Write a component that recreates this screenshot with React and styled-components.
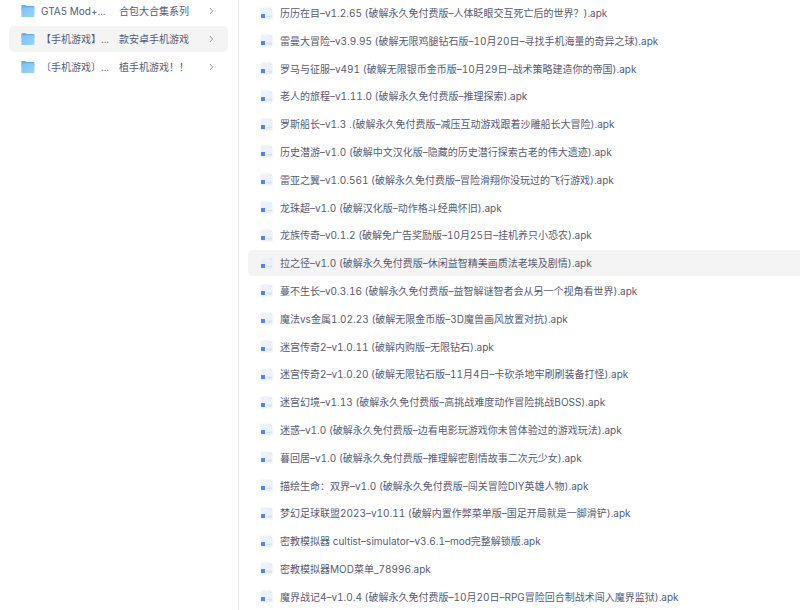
import React from "react";
import styled, { createGlobalStyle } from "styled-components";

const GlobalStyle = createGlobalStyle`
  * { box-sizing: border-box; }
  body {
    margin: 0;
    background: #ffffff;
    color: #585b75;
    font-family: Inter, "Noto Sans CJK SC", sans-serif;
    font-size: 10px;
    font-variant-numeric: tabular-nums;
    line-height: 16px;
    overflow: hidden;
  }
`;

const Page = styled.div`
  display: grid;
  grid-template-columns: 239px minmax(0, 1fr);
  height: 100vh;
`;

const Sidebar = styled.nav`
  border-right: 1px solid #e9e9ec;
  padding: 0 10px 0 9px;
  overflow: hidden;
`;

const FolderList = styled.ul`
  list-style: none;
  margin: -2px 0 0;
  padding: 0;
  display: grid;
  gap: 2px;
`;

const FolderButton = styled.button`
  display: flex;
  align-items: center;
  width: 100%;
  height: 26px;
  padding: 0 14px 0 12px;
  border: 0;
  border-radius: 5px;
  background: ${(p) => (p.$active ? "#f4f4f4" : "transparent")};
  color: inherit;
  font: inherit;
  text-align: left;
  cursor: pointer;
  &:hover { background: #f4f4f4; }
`;

const FolderName = styled.span`
  display: flex;
  justify-content: space-between;
  flex: 1;
  margin: 0 20px 0 6px;
  white-space: pre;
`;

const FileList = styled.ul`
  list-style: none;
  margin: 0;
  padding: 0 0 0 9px;
  min-height: 100vh;
  display: grid;
  align-content: space-between;
`;

const FileLink = styled.a`
  display: flex;
  align-items: center;
  gap: 7px;
  height: 26px;
  padding: 0 12px;
  border-radius: 5px 0 0 5px;
  background: ${(p) => (p.$active ? "#f4f4f4" : "transparent")};
  color: inherit;
  text-decoration: none;
  white-space: pre;
  &:hover { background: #f4f4f4; }
`;

const Icon = styled.svg`
  display: block;
  flex: none;
`;

function FolderIcon() {
  return (
    <Icon width="14" height="14" viewBox="0 0 14 14" aria-hidden="true">
      <defs>
        <linearGradient id="folder-front" x1="0" y1="0" x2="1" y2="1">
          <stop offset="0" stopColor="#7dc0f3" />
          <stop offset="1" stopColor="#9bd3fb" />
        </linearGradient>
      </defs>
      <path d="M0.4 2Q0.4 1 1.4 1H4.6L5.6 2H12.4Q13.4 2 13.4 3V6H0.4Z" fill="#62aeea" />
      <path d="M0.4 3.2H13.4V12.4Q13.4 13 12.8 13H1Q0.4 13 0.4 12.4Z" fill="url(#folder-front)" />
    </Icon>
  );
}

function ApkIcon() {
  return (
    <Icon width="13" height="13" viewBox="0 0 13 13" aria-hidden="true">
      <path d="M0.5 2Q0.5 0.5 2 0.5H10L12.7 3V12.5H2Q0.5 12.5 0.5 11Z" fill="#edf1fb" />
      <path d="M10 0.5L12.7 3H10Z" fill="#dce5fa" />
      <rect x="1" y="7" width="4" height="4" fill="#5583f6" />
      <path d="M6.5 10.5L8 8.8L9 10.5M9.6 10.5V9H11.6V10.5" fill="none" stroke="#cfd9f2" strokeWidth="0.8" />
    </Icon>
  );
}

function Chevron() {
  return (
    <Icon width="5" height="8" viewBox="0 0 5 8" aria-hidden="true">
      <path d="M1 1L3.6 4L1 7" fill="none" stroke="#8e90a1" strokeWidth="0.9" />
    </Icon>
  );
}

const folders = [
  { head: "GTA5 Mod+...", tail: "合包大合集系列" },
  { head: "【手机游戏】...", tail: "款安卓手机游戏", active: true },
  { head: "〔手机游戏〕...", tail: "植手机游戏！！" },
];

const selectedFile = 9;

const files = [
  "历历在目–v1.2.65 (破解永久免付费版–人体眨眼交互死亡后的世界？).apk",
  "雷曼大冒险–v3.9.95 (破解无限鸡腿钻石版–10月20日–寻找手机海量的奇异之球).apk",
  "罗马与征服–v491 (破解无限银币金币版–10月29日–战术策略建造你的帝国).apk",
  "老人的旅程–v1.11.0 (破解永久免付费版–推理探索).apk",
  "罗斯船长–v1.3 .(破解永久免付费版–减压互动游戏跟着沙雕船长大冒险).apk",
  "历史潜游–v1.0 (破解中文汉化版–隐藏的历史潜行探索古老的伟大遗迹).apk",
  "雷亚之翼–v1.0.561 (破解永久免付费版–冒险滑翔你没玩过的飞行游戏).apk",
  "龙珠超–v1.0 (破解汉化版–动作格斗经典怀旧).apk",
  "龙族传奇–v0.1.2 (破解免广告奖励版–10月25日–挂机养只小恐农).apk",
  "拉之径–v1.0 (破解永久免付费版–休闲益智精美画质法老埃及剧情).apk",
  "蔓不生长–v0.3.16 (破解永久免付费版–益智解谜智者会从另一个视角看世界).apk",
  "魔法vs金属1.02.23 (破解无限金币版–3D魔兽画风放置对抗).apk",
  "迷宫传奇2–v1.0.11 (破解内购版–无限钻石).apk",
  "迷宫传奇2–v1.0.20 (破解无限钻石版–11月4日–卡砍杀地牢刷刷装备打怪).apk",
  "迷宫幻境–v1.13 (破解永久免付费版–高挑战难度动作冒险挑战BOSS).apk",
  "迷惑–v1.0 (破解永久免付费版–边看电影玩游戏你未曾体验过的游戏玩法).apk",
  "暮回居–v1.0 (破解永久免付费版–推理解密剧情故事二次元少女).apk",
  "描绘生命：双界–v1.0 (破解永久免付费版–闯关冒险DIY英雄人物).apk",
  "梦幻足球联盟2023–v10.11 (破解内置作弊菜单版–国足开局就是一脚滑铲).apk",
  "密教模拟器 cultist–simulator–v3.6.1–mod完整解锁版.apk",
  "密教模拟器MOD菜单_78996.apk",
  "魔界战记4–v1.0.4 (破解永久免付费版–10月20日–RPG冒险回合制战术闯入魔界监狱).apk",
];

export default function App() {
  return (
    <>
      <GlobalStyle />
      <Page lang="zh-CN">
        <Sidebar>
          <FolderList>
            {folders.map((f) => (
              <li key={f.head}>
                <FolderButton type="button" $active={f.active}>
                  <FolderIcon />
                  <FolderName>
                    <span>{f.head}</span>
                    <span>{f.tail}</span>
                  </FolderName>
                  <Chevron />
                </FolderButton>
              </li>
            ))}
          </FolderList>
        </Sidebar>
        <main>
          <FileList>
            {files.map((name, i) => (
              <li key={name}>
                <FileLink href="#" $active={i === selectedFile}>
                  <ApkIcon />
                  <span>{name}</span>
                </FileLink>
              </li>
            ))}
          </FileList>
        </main>
      </Page>
    </>
  );
}
